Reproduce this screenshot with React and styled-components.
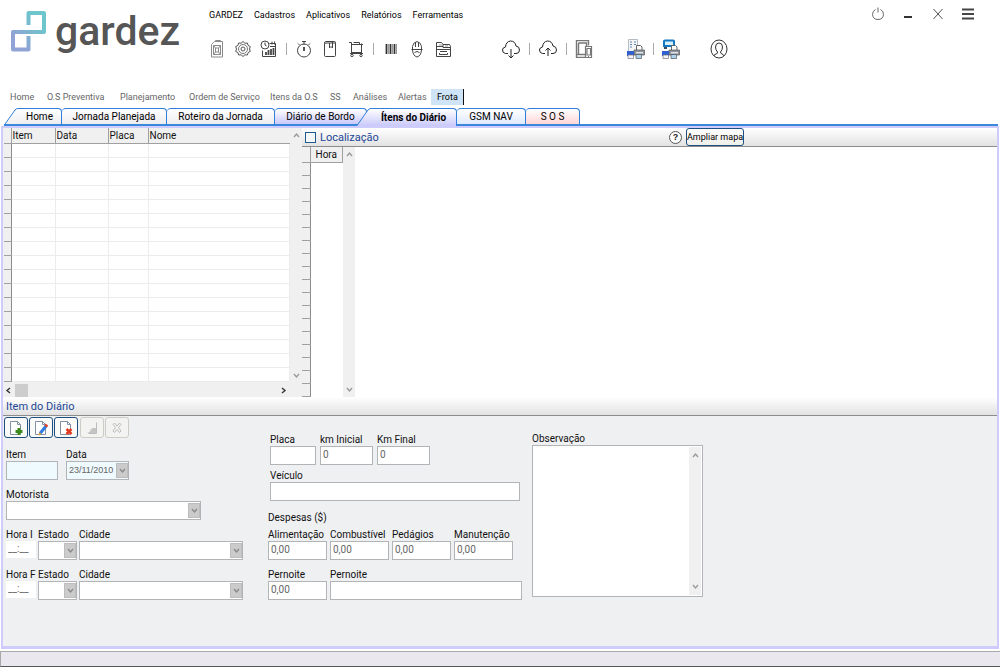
import React from 'react'
import styled, { createGlobalStyle } from 'styled-components'

const menu = ['GARDEZ', 'Cadastros', 'Aplicativos', 'Relatórios', 'Ferramentas']

const sections = [
    { name: 'Home', width: 37 },
    { name: 'O.S Preventiva', width: 73 },
    { name: 'Planejamento', width: 69 },
    { name: 'Ordem de Serviço', width: 81 },
    { name: 'Itens da O.S', width: 60 },
    { name: 'SS', width: 23 },
    { name: 'Análises', width: 45 },
    { name: 'Alertas', width: 33 },
]

const expenses = ['Alimentação', 'Combustível', 'Pedágios', 'Manutenção']

const Icon = ({ size = 18, width = size, children, ...rest }) => (
    <svg width={width} height={size} viewBox={`0 0 ${width} ${size}`} fill="none" stroke="#444" strokeWidth="1" aria-hidden="true" {...rest}>
        {children}
    </svg>
)

const Fuel = () => (
    <Icon stroke="#8a8a8a">
        <path d="M3.500 4.500 6.500 1.500h8v15.500h-11zM7.500 1.500V.5h5v1M5.500 5.500h7v9h-7zM7.500 8v4h3V8zM5.500 5.500l2 2.500M12.500 5.500l-2 2.500M5.500 14.500l2-2.500M12.500 14.500l-2-2.500" />
    </Icon>
)
const Gear = () => (
    <Icon stroke="#555">
        <path d="M9 1.500l1.900 1.700 2.500-.2.700 2.400 2.200 1.200-.8 2.400.8 2.400-2.200 1.200-.7 2.400-2.500-.2L9 16.500l-1.900-1.700-2.500.2-.7-2.400-2.200-1.200.8-2.400-.8-2.400 2.200-1.200.7-2.400 2.500.2z" />
        <circle cx="9" cy="9" r="4.500" stroke="#777" />
        <circle cx="9" cy="9" r="2" />
    </Icon>
)
const Report = () => (
    <Icon>
        <circle cx="5" cy="5" r="4" />
        <path d="M5 2.500V5l1.500 1M9.500 3.500h6v13h-13v-6M12 1.500v3M14.500 1.500v3M10 6.500h6" />
        <path d="M6 15v-3M8.500 15v-5M11 15V9M13.500 15V8" strokeWidth="1.800" />
    </Icon>
)
const Stopwatch = () => (
    <Icon>
        <circle cx="9" cy="10.500" r="6.500" />
        <path d="M7 1.500h4M9 1.500v3M3 3.500l1.500 1.500M15 3.500 13.500 5" />
        <path d="M9 7v4" strokeWidth="1.800" />
    </Icon>
)
const Notebook = () => (
    <Icon>
        <path d="M4.500 1.500h9q1 0 1 1v13q0 1-1 1h-9q-1 0-1-1v-12q0-2 1-2zM3.500 4q0-1 1.500-1h9.500M8.500 3v5l1.500-1.500L11.500 8V2" />
    </Icon>
)
const Cart = () => (
    <Icon>
        <path d="M2 2.500h2.500v11h10v-10M4.500 4.500h10M6.500 2.500h6v2M3 13.500h13M4.500 12.500h10M14.500 4.500H16" />
        <circle cx="5" cy="15.500" r="1.200" />
        <circle cx="14" cy="15.500" r="1.200" />
    </Icon>
)
const Barcode = () => (
    <Icon stroke="#333">
        <path d="M4.500 4v10M8.500 4v10M12.500 4v10" strokeWidth="1.800" />
        <path d="M6.500 4v10M10.500 4v10M14.500 4v10" stroke="#999" />
    </Icon>
)
const Helmet = () => (
    <Icon>
        <path d="M4.500 9V6.500Q5 2.500 9 1.500q4 1 4.500 5V9M3.500 9.500h11M4.500 10q.5 6 4.500 7 4-1 4.500-7M7.500 2v5M10.500 2v5M6.500 12.500l2.500-1 2.500 1" />
    </Icon>
)
const Cabinet = () => (
    <Icon>
        <path d="M2.500 16.500v-14h5l1.500 2h6.500l1 2v10zM2.500 6.500H9M9 4.500v3h7M2.500 9.500h14M5.500 13v1.500h8V13M6 11.500h7" />
        <path d="M5 5h3M11 6h3" stroke="#999" />
    </Icon>
)
const Cloud = ({ up }) => (
    <Icon width={20} size={20} stroke="#222">
        <path d="M7 14.500H4.500q-3-.5-3-3.500 0-2.500 3-3Q5 2.500 9.500 2q4.500 0 5.500 5 3.500.5 3.500 4t-3.500 3.500h-2" />
        {up ? <path d="M10 17V9.500M7.500 11.500 10 9l2.500 2.500" /> : <path d="M10 10v8.500M7.500 16.500 10 19l2.500-2.500" />}
    </Icon>
)
const Devices = () => (
    <Icon stroke="#777">
        <path d="M10 17.500H1.500v-17h12v5M3.500 3h8v3M3.500 3v11.500H10M1.500 14.500H10" strokeWidth="1.400" />
        <path d="M10.500 6.500h6v11h-6zM12 8.500h3.500v6.500H12zM13 16.500h1" strokeWidth="1.200" />
    </Icon>
)
const Printer = ({ truck }) => (
    <Icon size={20} width={18} stroke="none">
        {truck ? (
            <>
                <path d="M1 2q0-1.500 2-1.500h8q2 0 2 1.500v6H1z" fill="#1377c2" />
                <path d="M3 2.500h8V6H3z" fill="#d8effc" />
                <path d="M2 8h3v2H2zM9 8h3v2H9z" fill="#3c4a58" />
            </>
        ) : (
            <>
                <path d="M1.500.5h9v12h-9z" fill="#f3f5f7" stroke="#b5bcc4" />
                <path d="M3 3h2M7 3h2M3 5.500h2M7 5.500h2M3 8h2" stroke="#5b86b5" />
            </>
        )}
        <path d="M9.500 6.500h4l1.500 1.500v4H9.500z" fill="#fff" stroke="#666" />
        <path d="M7 11h10.500v5H7z" fill="#8f969d" stroke="#555" strokeWidth=".7" />
        <path d="M9 13h7v1.500H9z" fill="#dfe3e7" />
        <path d="M0 12h7v5H0z" fill="#2f5fd0" />
        <path d="M1 16h5.500v3.500H1z" fill="#f2f5fb" stroke="#777" strokeWidth=".7" />
        <path d="M9 15.500h5.500v4H9z" fill="#a9d3ee" stroke="#555" strokeWidth=".7" />
    </Icon>
)
const User = () => (
    <Icon size={20} width={18} stroke="#333">
        <ellipse cx="9" cy="10" rx="8" ry="9" />
        <path d="M4 17q0-1.500 2-2t1.500-2Q5.500 11 5.500 8q0-4 3.500-4t3.500 4q0 3-2 5 0 1.500 1.500 2t2 2" />
    </Icon>
)

const Page = ({ children }) => (
    <Icon size={16}>
        <path d="M2.500 1.500h7l3 3v10h-10z" fill="#fff" stroke="#8290a3" />
        <path d="M9.500 1.500v3h3" stroke="#8290a3" />
        {children}
    </Icon>
)

const Chevron = ({ dir = 'down', color = '#9a9a9a' }) => {
    const turn = { down: 0, left: 90, up: 180, right: 270 }[dir]
    return (
        <svg width="9" height="9" viewBox="0 0 9 9" fill="none" stroke={color} strokeWidth="1.400" aria-hidden="true">
            <path d="M2 3l2.500 3L7 3" transform={`rotate(${turn} 4.500 4.500)`} />
        </svg>
    )
}

const Slant = ({ fill, line }) => (
    <svg width="14" height="18" viewBox="0 0 14 18" aria-hidden="true">
        <defs>
            <linearGradient id={line ? 'slantHome' : 'slantActive'} x1="0" y1="0" x2="0" y2="1">
                <stop offset="0" stopColor="#fff" />
                <stop offset="1" stopColor={fill} />
            </linearGradient>
        </defs>
        <path d="M0 18 11 2q1-1.500 3-1.500V18z" fill={`url(#${line ? 'slantHome' : 'slantActive'})`} />
        {line && <path d="M0 17h14" stroke="#3b87dc" strokeWidth="2" />}
        <path d="M0 17.500 11 2Q12 .5 14 .5" fill="none" stroke="#2f7fdb" />
    </svg>
)

const Combo = ({ id, label, width, value, tint }) => (
    <Field $width={width}>
        <label htmlFor={id}>{label}</label>
        <ComboBox $tint={tint}>
            <select id={id} defaultValue={value}>
                <option>{value}</option>
            </select>
            <Arrow><Chevron color="#8a8a8a" /></Arrow>
        </ComboBox>
    </Field>
)

const Text = ({ id, label, width, value, tint, plain }) => (
    <Field $width={width}>
        <label htmlFor={id}>{label}</label>
        <Input id={id} defaultValue={value} $tint={tint} $plain={plain} />
    </Field>
)

const App = () => {
    return (
        <>
        <GlobalStyle />
        <Window>
            <Header>
                <Brand>
                    <svg width="36" height="42" viewBox="0 0 36 42" fill="none" strokeWidth="4" aria-hidden="true">
                        <defs>
                            <linearGradient id="brand" x1="0" y1="1" x2="1" y2="0">
                                <stop offset="0.200" stopColor="#8fa3d6" />
                                <stop offset="0.800" stopColor="#6cc6cb" />
                            </linearGradient>
                        </defs>
                        <path d="M17.500 15V3H33v19H2v17.500h15.500V26" stroke="url(#brand)" strokeLinejoin="round" />
                    </svg>
                    <Name>gardez</Name>
                </Brand>
                <Center>
                    <Menu>
                        {menu.map(item => <a href="#" key={item}>{item}</a>)}
                    </Menu>
                    <Toolbar>
                        <Tools>
                            <Tool aria-label="Abastecimento"><Fuel /></Tool>
                            <Tool aria-label="Peças"><Gear /></Tool>
                            <Tool aria-label="Relatório"><Report /></Tool>
                            <Divider />
                            <Tool aria-label="Cronômetro"><Stopwatch /></Tool>
                            <Tool aria-label="Agenda"><Notebook /></Tool>
                            <Tool aria-label="Compras"><Cart /></Tool>
                            <Divider />
                            <Tool aria-label="Código de barras"><Barcode /></Tool>
                            <Tool aria-label="Operador"><Helmet /></Tool>
                            <Tool aria-label="Arquivo"><Cabinet /></Tool>
                        </Tools>
                        <Tools>
                            <Tool aria-label="Baixar"><Cloud /></Tool>
                            <Divider />
                            <Tool aria-label="Enviar"><Cloud up /></Tool>
                            <Divider />
                            <Tool aria-label="Dispositivos"><Devices /></Tool>
                        </Tools>
                        <Tools>
                            <Tool aria-label="Imprimir lista"><Printer /></Tool>
                            <Divider />
                            <Tool aria-label="Imprimir frota"><Printer truck /></Tool>
                        </Tools>
                        <Tools>
                            <Tool aria-label="Usuário"><User /></Tool>
                        </Tools>
                    </Toolbar>
                </Center>
                <Controls>
                    <Tool aria-label="Sair">
                        <Icon size={14}><path d="M4.500 2.500Q1.500 4 1.500 7.500q.5 5 5.500 5t5.500-5q0-3.500-3-5M7 .5v5" stroke="#666" /></Icon>
                    </Tool>
                    <Tool aria-label="Minimizar">
                        <Icon size={14}><path d="M3 10h8" strokeWidth="2" stroke="#333" /></Icon>
                    </Tool>
                    <Tool aria-label="Fechar">
                        <Icon size={14}><path d="M2.500 2l9 10M11.500 2l-9 10" stroke="#555" /></Icon>
                    </Tool>
                    <Tool aria-label="Opções">
                        <Icon size={14}><path d="M1 2.500h12M1 7h12M1 11.500h12" strokeWidth="2" /></Icon>
                    </Tool>
                </Controls>
            </Header>

            <Sections>
                {sections.map(s => <Section href="#" key={s.name} $width={s.width}>{s.name}</Section>)}
                <Current href="#">Frota</Current>
            </Sections>

            <Tabs>
                <SlantTab>
                    <Slant fill="#ededf0" line />
                    <Tab $width={44} $flat>Home</Tab>
                </SlantTab>
                <Tab $width={105}>Jornada Planejada</Tab>
                <Tab $width={108}>Roteiro da Jornada</Tab>
                <Tab $width={92} $to="#c9c9fb">Diário de Bordo</Tab>
                <SlantTab $over>
                    <Slant fill="#c9c9fb" />
                    <Tab $width={86} $to="#c9c9fb" $flat $active>Ítens do Diário</Tab>
                </SlantTab>
                <Tab $width={69} $to="#dfeaff">GSM NAV</Tab>
                <Tab $width={54} $to="#ffd6d6">S O S</Tab>
                <TabsEnd />
            </Tabs>

            <Frame>
                <Upper>
                    <GridPane>
                        <GridArea>
                            <Items>
                                <colgroup>
                                    <col width="7" />
                                    <col width="44" />
                                    <col width="53" />
                                    <col width="40" />
                                    <col />
                                </colgroup>
                                <thead>
                                    <tr><th aria-label="Linha" /><th>Item</th><th>Data</th><th>Placa</th><th>Nome</th></tr>
                                </thead>
                                <tbody>
                                    {Array.from({ length: 17 }, (_, i) => (
                                        <tr key={i}><td /><td /><td /><td /><td /></tr>
                                    ))}
                                </tbody>
                            </Items>
                            <ScrollX>
                                <Chevron dir="left" color="#333" />
                                <Thumb />
                                <Chevron dir="right" color="#333" />
                            </ScrollX>
                        </GridArea>
                        <ScrollY $bottom={17}>
                            <Chevron dir="up" />
                            <Chevron />
                        </ScrollY>
                    </GridPane>
                    <MapPane>
                        <Bar>
                            <Check type="checkbox" id="loc" />
                            <label htmlFor="loc">Localização</label>
                            <Help aria-label="Ajuda">?</Help>
                            <MapButton>Ampliar mapa</MapButton>
                        </Bar>
                        <HourPane>
                            <Hours>
                                <colgroup><col width="8" /><col /></colgroup>
                                <thead>
                                    <tr><th aria-label="Linha" /><th>Hora</th></tr>
                                </thead>
                                <tbody>
                                    {Array.from({ length: 18 }, (_, i) => (
                                        <tr key={i}><td /><td /></tr>
                                    ))}
                                </tbody>
                            </Hours>
                            <ScrollY>
                                <Chevron dir="up" />
                                <Chevron />
                            </ScrollY>
                        </HourPane>
                    </MapPane>
                </Upper>

                <Bar><h2>Item do Diário</h2></Bar>

                <Form>
                    <Column>
                        <Actions>
                            <Action type="button" aria-label="Novo">
                                <Page><path d="M11 8v7M7.500 11.500h7" stroke="#3d8b1e" strokeWidth="3" /></Page>
                            </Action>
                            <Action type="button" aria-label="Editar">
                                <Page>
                                    <path d="M7 13.500l6.500-8" stroke="#2f7be0" strokeWidth="3" />
                                    <path d="M12.500 6.500l1.500-2" stroke="#e0452c" strokeWidth="3" />
                                    <path d="M6 15l1.500-2" stroke="#e0a43c" strokeWidth="2" />
                                </Page>
                            </Action>
                            <Action type="button" aria-label="Excluir">
                                <Page><path d="M8.500 9l5 5M13.500 9l-5 5" stroke="#e03a22" strokeWidth="2.500" /></Page>
                            </Action>
                            <Gap />
                            <Action type="button" disabled aria-label="Salvar">
                                <Icon size={16} stroke="#bbb"><path d="M12.500 2.500v11h-8M7 9v4M9.500 9v4" /><path d="M3 13h9V8H8l-1 3z" fill="#c4c4c4" stroke="none" /></Icon>
                            </Action>
                            <Action type="button" disabled aria-label="Cancelar">
                                <Icon size={16} stroke="#bbb"><path d="M4 4.500 5.500 3 8 6l2.500-3L12 4.500 9.500 7.500 12 11l-1.500 1.500L8 9.500l-2.500 3L4 11l2.500-3.500z" /></Icon>
                            </Action>
                        </Actions>
                        <Row $gap={8}>
                            <Text id="item" label="Item" width={52} tint />
                            <Combo id="data" label="Data" width={63} value="23/11/2010" tint />
                        </Row>
                        <Row>
                            <Combo id="motorista" label="Motorista" width={195} value="" />
                        </Row>
                        {['I', 'F'].map(k => (
                            <Row $gap={2} key={k}>
                                <Text id={'hora' + k} label={'Hora ' + k} width={30} value="__:__" plain />
                                <Combo id={'estado' + k} label="Estado" width={39} value="" />
                                <Combo id={'cidade' + k} label="Cidade" width={164} value="" />
                            </Row>
                        ))}
                    </Column>
                    <Middle>
                        <Vehicle>
                            <Row $gap={4}>
                                <Text id="placa" label="Placa" width={46} />
                                <Text id="kmi" label="km Inicial" width={53} value="0" />
                                <Text id="kmf" label="Km Final" width={53} value="0" />
                            </Row>
                            <Row><Text id="veiculo" label="Veículo" width={250} /></Row>
                        </Vehicle>
                        <Legend>Despesas ($)</Legend>
                        <Expenses>
                            {expenses.map(e => <Text id={e} key={e} label={e} width={59} value="0,00" />)}
                        </Expenses>
                        <Expenses>
                            <Text id="pernoite" label="Pernoite" width={59} value="0,00" />
                            <Text id="local" label="Pernoite" width={192} />
                        </Expenses>
                    </Middle>
                    <Notes>
                        <label htmlFor="obs">Observação</label>
                        <NotesBox>
                            <textarea id="obs" />
                            <ScrollY $top={4} $bottom={4}>
                                <Chevron dir="up" />
                                <Chevron />
                            </ScrollY>
                        </NotesBox>
                    </Notes>
                </Form>
            </Frame>
            <Status />
        </Window>
        </>
    )
}

const GlobalStyle = createGlobalStyle`
    * {
        box-sizing: border-box;
    }
    body {
        margin: 0;
        background: #fff;
        color: #111;
        font: 10px/13px Roboto, "Liberation Sans", sans-serif;
    }
    button, input, select, textarea {
        font: inherit;
        color: inherit;
        margin: 0;
    }
    a {
        color: inherit;
        text-decoration: none;
    }
    svg {
        display: block;
        flex: none;
    }
`;

const Window = styled.div`
    min-height: 100vh;
    display: flex;
    flex-direction: column;
`;

const Header = styled.header`
    display: flex;
    height: 89px;
    padding-left: 11px;
`;

const Brand = styled.div`
    display: flex;
    width: 197px;
    gap: 8px;
    padding-top: 10px;
`;

const Name = styled.span`
    font: 500 41px/43px Roboto, sans-serif;
    color: #565656;
`;

const Center = styled.div`
    flex: 1;
    padding-top: 9px;
`;

const Menu = styled.nav`
    display: flex;
    gap: 11px;
    padding-left: 1px;
    font-size: 9px;
    color: #000;
`;

const Toolbar = styled.div`
    display: flex;
    margin-top: 17px;
    gap: 49px;
    & > :nth-child(3) {
        margin-left: -15px;
    }
    & > :nth-child(4) {
        margin-left: -19px;
    }
`;

const Tools = styled.div`
    display: flex;
    align-items: center;
    height: 20px;
    gap: 8px;
`;

const Tool = styled.button`
    padding: 0;
    border: 0;
    background: none;
`;

const Divider = styled.span`
    width: 1px;
    height: 12px;
    background: #aaa;
`;

const Controls = styled.div`
    display: flex;
    align-items: flex-start;
    gap: 16px;
    padding: 7px 25px 0 0;
`;

const Sections = styled.nav`
    display: flex;
    height: 16px;
    padding-left: 10px;
    font-size: 9px;
    line-height: 16px;
    color: #666;
`;

const Section = styled.a`
    width: ${p => p.$width}px;
    white-space: nowrap;
`;

const Current = styled.a`
    padding: 0 5px 0 6px;
    background: #cfe5f7;
    border-right: 1px solid #111;
    color: #000;
`;

const Tabs = styled.div`
    display: flex;
    height: 18px;
    margin: 3px 2px 0 4px;
`;

const Tab = styled.button`
    width: ${p => p.$width}px;
    height: 18px;
    padding: 0;
    white-space: nowrap;
    border: solid #2f7fdb;
    border-width: ${p => (p.$active ? '1px 1px 0 0' : '1px 1px 2px 0')};
    border-bottom-color: #3b87dc;
    border-radius: ${p => (p.$flat ? '0 4px 0 0' : '4px 4px 0 0')};
    background: linear-gradient(#fff, ${p => p.$to || '#ededf0'});
    font-weight: ${p => (p.$active ? 700 : 400)};
    color: #000;
`;

const SlantTab = styled.div`
    display: flex;
    z-index: 1;
    margin-left: ${p => (p.$over ? '-10px' : 0)};
`;

const TabsEnd = styled.div`
    flex: 1;
    border-bottom: 2px solid #3b87dc;
`;

const Frame = styled.main`
    flex: 1;
    display: flex;
    flex-direction: column;
    margin: 0 1px 2px;
    border: 2px solid #ceccfc;
    border-bottom-width: 3px;
`;

const Upper = styled.div`
    display: flex;
    height: 269px;
`;

const GridPane = styled.div`
    display: flex;
    width: 299px;
    padding-left: 1px;
    background: #f0f0f0;
`;

const GridArea = styled.div`
    flex: 1;
    display: flex;
    flex-direction: column;
    justify-content: space-between;
`;

const Table = styled.table`
    width: 100%;
    border-collapse: collapse;
    table-layout: fixed;
    background: #fff;
    th, td {
        padding: 0;
    }
    th {
        height: 15px;
        font-weight: 400;
        background: #f0f0f0;
        border-bottom: 1px solid #a0a0a0;
        border-right: 1px solid #a0a0a0;
    }
    td:first-child {
        background: #f0f0f0;
        border-right: 1px solid #8c8c8c;
        border-bottom: 1px solid #a0a0a0;
    }
`;

const Items = styled(Table)`
    th {
        text-align: left;
        padding-left: 1px;
    }
    th:last-child {
        border-right: 0;
    }
    td {
        height: 14px;
        border-bottom: 1px solid #ececec;
        border-right: 1px solid #ececec;
    }
`;

const Hours = styled(Table)`
    width: 41px;
    td {
        height: 13px;
    }
`;

const ScrollX = styled.div`
    display: flex;
    align-items: center;
    height: 14px;
    & > :last-child {
        margin-left: auto;
        margin-right: 2px;
    }
`;

const Thumb = styled.div`
    width: 13px;
    height: 13px;
    margin-left: 2px;
    background: #cdcdcd;
`;

const ScrollY = styled.div`
    display: flex;
    flex-direction: column;
    justify-content: space-between;
    align-items: center;
    width: 12px;
    padding: ${p => p.$top || 3}px 0 ${p => p.$bottom || 3}px;
    background: #f0f0f0;
`;

const MapPane = styled.div`
    flex: 1;
`;

const Bar = styled.div`
    display: flex;
    align-items: center;
    height: 19px;
    padding-left: 3px;
    font-size: 11px;
    color: #1c4696;
    background: linear-gradient(#fff, #e2e2e2);
    border-bottom: 1px solid #8c8c8c;
    h2 {
        margin: 0;
        font: inherit;
    }
    label {
        width: 60px;
    }
`;

const Check = styled.input`
    appearance: none;
    width: 11px;
    height: 11px;
    margin-right: 4px;
    border: 1px solid #1f5a8c;
    background: #f5f7f9;
`;

const Help = styled.button`
    width: 13px;
    height: 13px;
    margin-left: 289px;
    padding: 0;
    border: 1px solid #555;
    border-radius: 50%;
    background: #fff;
    color: #222;
    font: 700 9px/11px "Liberation Sans", sans-serif;
`;

const MapButton = styled.button`
    width: 58px;
    height: 18px;
    margin-left: 4px;
    padding: 0;
    border: 1px solid #1f4e80;
    border-radius: 3px;
    background: linear-gradient(#fff, #eeeeea);
    color: #000;
    font: 9px/13px Roboto, "Liberation Sans", sans-serif;
    white-space: nowrap;
`;

const HourPane = styled.div`
    display: flex;
    width: 53px;
    height: 250px;
    overflow: hidden;
`;

const Form = styled.form`
    flex: 1;
    display: grid;
    grid-template-columns: 262px 264px 171px;
    padding: 1px 0 0 3px;
    background: #eff0f2;
`;

const Column = styled.div`
    display: flex;
    flex-direction: column;
    gap: 8px;
`;

const Actions = styled.div`
    display: flex;
    height: 22px;
    margin: 0 0 1px -2px;
`;

const Action = styled.button`
    display: flex;
    align-items: center;
    justify-content: center;
    width: 24px;
    height: 21px;
    margin-right: 1px;
    padding: 0;
    border: 1px solid ${p => (p.disabled ? '#cfccc6' : '#1f4e80')};
    border-radius: 3px;
    background: ${p => (p.disabled ? '#f3f3f1' : '#fafaf8')};
`;

const Gap = styled.span`
    width: 1px;
`;

const Row = styled.div`
    display: flex;
    gap: ${p => p.$gap || 0}px;
`;

const Field = styled.div`
    display: flex;
    flex-direction: column;
    width: ${p => p.$width}px;
    label {
        white-space: nowrap;
    }
`;

const Input = styled.input`
    width: 100%;
    height: ${p => (p.$plain ? 17 : 19)}px;
    padding: 0 2px 2px;
    border: ${p => (p.$plain ? '0' : '1px solid #b2b4b8')};
    background: ${p => (p.$tint ? '#effaff' : '#fff')};
    color: #666;
`;

const ComboBox = styled.div`
    display: flex;
    height: 19px;
    border: 1px solid #b2b4b8;
    background: ${p => (p.$tint ? '#effaff' : '#fff')};
    select {
        appearance: none;
        flex: 1;
        min-width: 0;
        padding: 0 0 0 2px;
        border: 0;
        background: none;
        color: #666;
        font: 9px/13px "Liberation Sans", sans-serif;
    }
`;

const Arrow = styled.span`
    display: flex;
    align-items: center;
    justify-content: center;
    width: 12px;
    margin: 1px 0;
    background: #cbcbcb;
    border: 1px solid #bdbdbd;
`;

const Middle = styled.div`
    padding-top: 16px;
`;

const Vehicle = styled.div`
    display: flex;
    flex-direction: column;
    gap: 4px;
    padding-left: 2px;
`;

const Legend = styled.div`
    margin: 10px 0 4px;
`;

const Expenses = styled.div`
    display: flex;
    gap: 3px;
    margin-bottom: 8px;
`;

const Notes = styled.div`
    padding-top: 15px;
`;

const NotesBox = styled.div`
    display: flex;
    height: 152px;
    padding: 1px;
    border: 1px solid #b2b4b8;
    background: #fff;
    textarea {
        flex: 1;
        min-width: 0;
        border: 0;
        resize: none;
    }
`;

const Status = styled.footer`
    height: 16px;
    border: 1px solid #a8a8a8;
    border-right: 0;
    border-bottom-color: #555;
    background: #eae8ee;
`;

export default App
